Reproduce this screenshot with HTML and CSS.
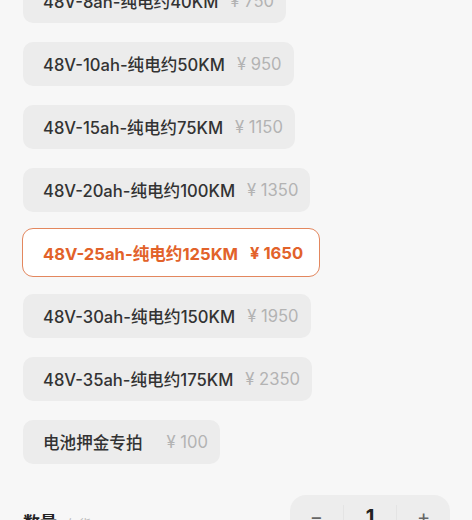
FILE: index.html
```html
<!DOCTYPE html>
<html lang="zh-CN">
<head>
    <meta charset="UTF-8">
    <meta name="viewport" content="width=device-width, initial-scale=1.0">
    <title>选择规格</title>
    <link rel="stylesheet" href="styles.css">
</head>
<body>

    <!-- Spec options -->
    <div class="spec-list">
        <div class="spec"><span class="spec-name">48V-8ah-纯电约40KM</span><span class="spec-price">¥ 750</span></div>
        <div class="spec"><span class="spec-name">48V-10ah-纯电约50KM</span><span class="spec-price">¥ 950</span></div>
        <div class="spec"><span class="spec-name">48V-15ah-纯电约75KM</span><span class="spec-price">¥ 1150</span></div>
        <div class="spec"><span class="spec-name">48V-20ah-纯电约100KM</span><span class="spec-price">¥ 1350</span></div>
        <div class="spec active"><span class="spec-name">48V-25ah-纯电约125KM</span><span class="spec-price">¥ 1650</span></div>
        <div class="spec"><span class="spec-name">48V-30ah-纯电约150KM</span><span class="spec-price">¥ 1950</span></div>
        <div class="spec"><span class="spec-name">48V-35ah-纯电约175KM</span><span class="spec-price">¥ 2350</span></div>
        <div class="spec wide-gap"><span class="spec-name">电池押金专拍</span><span class="spec-price">¥ 100</span></div>
    </div>

    <!-- Quantity -->
    <div class="qty-row">
        <div class="qty-label">数量 <span class="stock">有货</span></div>
        <div class="stepper">
            <span class="step-btn">−</span>
            <span class="step-num">1</span>
            <span class="step-btn">+</span>
        </div>
    </div>

</body>
</html>
```

FILE: styles.css
```css
* {
    margin: 0;
    padding: 0;
    box-sizing: border-box;
}

body {
    font-family: 'Inter', 'Noto Sans CJK SC', sans-serif;
    background: #f7f7f7;
    color: #333;
    padding-left: 23px;
    overflow: hidden;
}

/* Spec list (scrolled a little) */
.spec-list {
    display: flex;
    flex-direction: column;
    align-items: flex-start;
    gap: 19px;
    margin-top: -21px;
}

.spec {
    height: 44px;
    display: flex;
    align-items: center;
    gap: 12px;
    padding: 0 11px 0 19px;
    background: #ececec;
    border: 1.5px solid transparent;
    border-radius: 10px;
    font-size: 16.6px;
}

.spec.wide-gap {
    gap: 24px;
}

.spec-name {
    font-weight: 500;
    color: #333;
}

.spec-price {
    color: #b3b3b3;
}

/* selected option is drawn a bit larger than the others */
.spec.active {
    height: 49px;
    margin: -3px 0 -2px -1px;
    padding: 0 16px 0 20px;
    background: #fff;
    border-color: #e3875e;
    border-radius: 11px;
}

.spec.active .spec-name,
.spec.active .spec-price {
    color: #e2622a;
    font-weight: 700;
}

/* Quantity row */
.qty-row {
    display: flex;
    justify-content: space-between;
    align-items: center;
    margin-top: 31px;
    padding-right: 22px;
}

.qty-label {
    font-size: 17px;
    font-weight: 700;
    color: #222;
    padding-top: 8px;
}

.stock {
    font-size: 13px;
    font-weight: 400;
    color: #bbb;
    margin-left: 4px;
}

.stepper {
    width: 160px;
    height: 44px;
    display: flex;
    align-items: center;
    background: #ededed;
    border-radius: 16px;
}

.step-btn,
.step-num {
    flex: 1;
    text-align: center;
    font-size: 20px;
    color: #222;
}

.step-btn {
    color: #666;
}

.step-num {
    font-weight: 700;
    border-left: 1px solid #e4e4e4;
    border-right: 1px solid #e4e4e4;
}
```
